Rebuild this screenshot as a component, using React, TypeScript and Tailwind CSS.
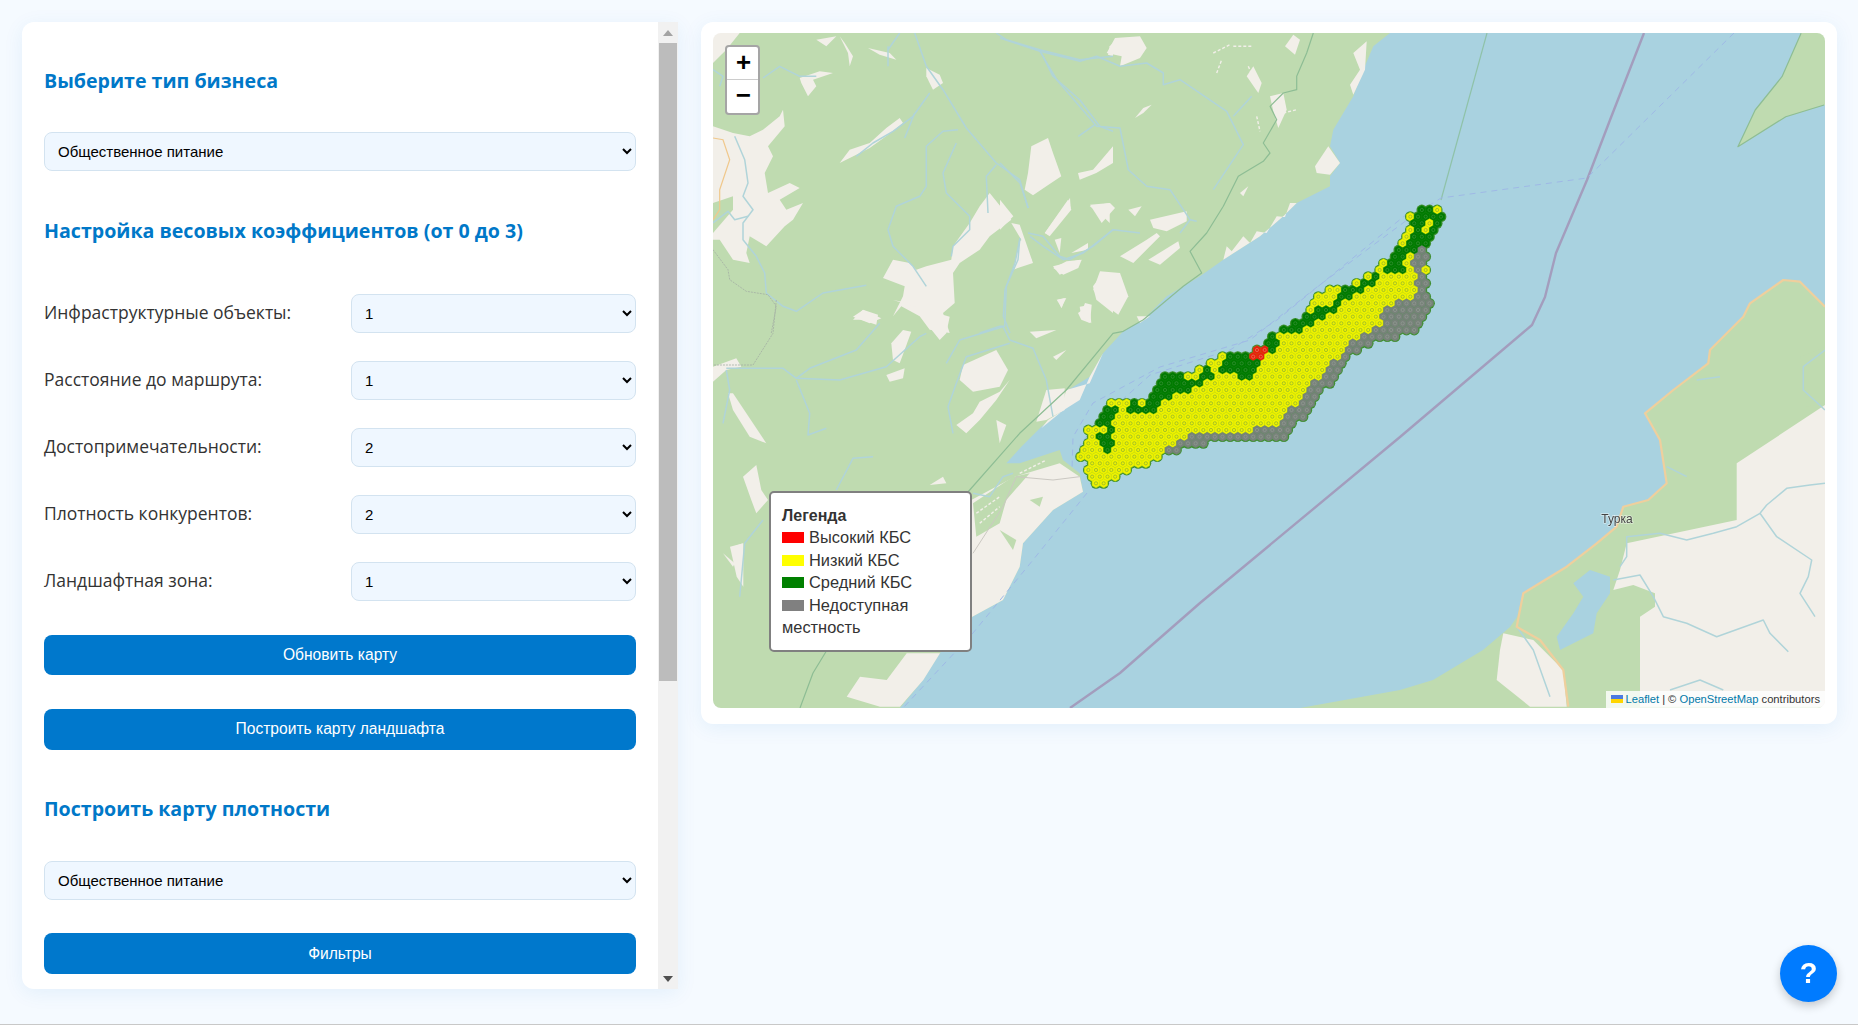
import { useMemo } from 'react';

// перевод координат из кропов 3x в координаты страницы
const conv = (ox: number, oy: number, sx = 3, sy = 3) => (a: number[]) => {
  const out: number[] = [];
  for (let i = 0; i < a.length; i += 2) {
    out.push(+(ox + a[i] / sx).toFixed(1), +(oy + a[i + 1] / sy).toFixed(1));
  }
  return out;
};
const A = conv(713, 33);
const B = conv(1000, 33);
const C = conv(713, 300);
const sw = conv(700, 400);
const se = conv(1400, 250);
const ne = conv(1250, 20, 2.613, 3);
const ph = (a: number[]) => a.join(' ');

const LAND_GREEN = '#bfdbb0';
const BARE = '#f2efe9';
const WATER = '#a9d2e0';
const RIVER = '#b0d4d9';

const westLand = [
  713, 33, 1390, 33,
  ...B([1120, 40, 1090, 110, 1060, 190, 1000, 290, 990, 340, 1020, 390, 990, 430, 990, 460, 890, 510, 850, 550, 780, 610, 670, 680, 600, 730, 500, 790, 430, 860, 370, 895]),
  ...C([1170, 160, 1130, 230, 1065, 270, 1050, 330, 985, 380, 925, 440, 880, 490, 920, 490, 1040, 450, 1050, 480, 1100, 520, 1110, 575, 1020, 630, 930, 730, 920, 800]),
  1003, 600, 970, 618, 940, 653, 923, 680, 900, 708, 713, 708,
];
const eastLand = [1825, 305, 1800, 282, 1783, 280, 1750, 303, 1743, 317, 1710, 350, 1707, 363, 1673, 390, 1645, 413, 1660, 440, 1667, 483, 1648, 500, 1623, 507, 1617, 527, 1597, 543, 1567, 567, 1523, 593, 1517, 617, 1510, 627, 1483, 650, 1433, 680, 1400, 690, 1300, 708, 1825, 708];
const neLand = [1801, 33, 1782, 77, 1755, 110, 1738, 147, 1786, 117, 1825, 105, 1825, 33];

const barePatches: number[][] = [
  A([0, 0, 80, 0, 40, 50, 0, 90]),
  A([0, 280, 60, 300, 110, 310, 150, 290, 200, 250, 210, 230, 215, 280, 165, 340, 180, 370, 155, 420, 165, 480, 230, 450, 260, 465, 200, 500, 220, 530, 270, 510, 240, 560, 215, 580, 160, 640, 110, 610, 100, 660, 110, 690, 60, 680, 20, 620, 0, 620]),
  A([260, 135, 320, 115, 360, 120, 300, 140, 310, 160, 285, 190, 265, 150]),
  A([410, 350, 470, 330, 520, 285, 560, 255, 570, 270, 540, 295, 470, 345, 430, 365, 380, 390]),
  A([465, 45, 530, 60, 550, 80, 500, 65]),
  A([640, 105, 680, 125, 690, 150, 660, 170, 640, 130]),
  A([830, 480, 895, 560, 830, 610, 800, 650, 740, 690, 720, 720, 725, 810, 690, 840, 710, 900, 650, 890, 620, 850, 565, 820, 540, 850, 570, 790, 575, 760, 510, 735, 540, 680, 590, 690, 610, 710, 640, 700, 715, 680, 720, 640, 770, 570, 800, 520]),
  A([955, 340, 1005, 315, 1020, 360, 1045, 430, 1000, 460, 960, 487, 935, 470, 945, 420]),
  A([1095, 420, 1140, 410, 1200, 340, 1200, 390, 1150, 420, 1100, 440]),
  A([995, 600, 1065, 500, 1075, 530, 1010, 610]),
  A([895, 570, 920, 575, 960, 690, 900, 710, 925, 620]),
  A([1130, 520, 1190, 510, 1190, 570, 1160, 540]),
  A([1025, 620, 1045, 615, 1040, 660]),
  A([1075, 660, 1125, 630, 1125, 650]),
  A([1020, 700, 1100, 680, 1095, 700, 1040, 725]),
  A([1140, 760, 1170, 720, 1200, 730, 1200, 840, 1150, 800]),
  A([420, 860, 450, 830, 495, 845, 490, 875, 445, 860]),
  A([1035, 800, 1060, 795, 1045, 825]),
  A([1095, 840, 1130, 815, 1130, 870, 1105, 860]),
  A([1190, 40, 1200, 30, 1200, 70, 1185, 65]),
  A([380, 10, 395, 30, 420, 70, 410, 100, 405, 60]),
  A([310, 20, 370, 10, 340, 40]),
  B([320, 60, 345, 15, 420, 10, 440, 45, 420, 75, 360, 100, 365, 70]),
  B([855, 40, 880, 5, 900, 20, 885, 65]),
  B([740, 130, 760, 100, 785, 150, 775, 180]),
  B([1060, 60, 1100, 25, 1095, 110, 1060, 185, 1050, 155, 1080, 110]),
  B([810, 190, 850, 180, 860, 230, 835, 285, 820, 235]),
  B([945, 400, 985, 340, 1020, 390, 990, 425, 950, 420]),
  B([270, 515, 330, 510, 345, 525, 305, 570]),
  B([135, 600, 210, 495, 212, 525, 145, 605]),
  B([385, 530, 425, 520, 405, 550]),
  B([450, 560, 560, 535, 560, 565, 500, 595, 460, 585]),
  B([360, 670, 440, 620, 470, 600, 480, 610, 400, 690]),
  B([445, 680, 535, 625, 540, 645, 480, 695]),
  B([160, 705, 200, 685, 245, 680, 235, 705, 190, 725]),
  B([280, 770, 300, 715, 360, 720, 385, 790, 355, 845, 300, 805]),
  B([0, 500, 40, 550, 0, 590]),
  B([40, 710, 60, 620, 95, 680]),
  B([240, 850, 255, 810, 275, 815, 270, 870]),
  B([170, 800, 195, 795, 185, 825]),
  B([670, 680, 680, 640, 695, 655, 730, 610, 750, 630, 770, 595, 800, 600, 830, 550, 855, 552, 870, 510, 890, 510, 850, 550, 780, 610, 670, 680]),
  B([410, 850, 450, 850, 420, 870]),
  B([405, 255, 430, 225, 455, 215, 430, 240]),
  B([720, 480, 745, 460, 730, 490]),
  C([0, 200, 70, 175, 85, 200, 40, 210, 0, 245]),
  C([45, 280, 60, 280, 160, 430, 110, 410, 60, 330]),
  C([535, 130, 570, 90, 595, 95, 560, 190, 540, 180]),
  C([520, 225, 575, 205, 570, 235, 530, 245]),
  C([420, 50, 450, 30, 505, 55, 470, 70]),
  C([750, 195, 850, 150, 885, 210, 860, 260, 780, 275, 740, 240]),
  C([730, 375, 780, 340, 800, 305, 860, 275, 890, 240, 850, 300, 800, 360, 760, 400]),
  C([950, 95, 1030, 90, 970, 115]),
  C([1000, 270, 1055, 265, 1055, 330, 1000, 360, 970, 365]),
  C([850, 360, 880, 375, 860, 430]),
  C([540, 0, 710, 50, 700, 100, 680, 120, 640, 70, 590, 10]),
  C([90, 530, 130, 495, 145, 570, 165, 600, 130, 640, 115, 600]),
  C([1020, 170, 1060, 150, 1030, 180]),
  C([30, 760, 65, 790, 60, 800]),
  C([60, 740, 90, 730, 75, 750]),
  C([985, 385, 1005, 360, 1100, 300, 1130, 230, 1170, 160, 1130, 250, 1060, 270, 1040, 340]),
  C([1100, 20, 1130, 15, 1135, 70, 1105, 50]),
  C([650, 555, 690, 530, 700, 550]),
  // полуостров южнее залива
  [...C([775, 600, 905, 530, 1040, 490, 1100, 530, 1110, 575, 1020, 630, 930, 730, 920, 800]), 1003, 600, 970, 618, 965, 560],
  sw([620, 760, 720, 760, 670, 840, 600, 920, 540, 920, 440, 890, 480, 830, 560, 840]),
  sw([90, 440, 130, 430, 130, 560, 110, 530]),
  se([1275, 465, 1010, 640, 1010, 810, 680, 880, 660, 960, 640, 1020, 700, 1005, 765, 1030, 765, 1070, 720, 1100, 720, 1370, 1275, 1370]),
  se([310, 1150, 400, 1170, 490, 1260, 500, 1370, 390, 1370, 290, 1290, 300, 1200]),
];

const greenOnBare: number[][] = [
  C([780, 610, 900, 530, 950, 520, 880, 600, 860, 670, 790, 710]),
  C([950, 600, 990, 590, 980, 620]),
  C([860, 690, 910, 720, 900, 750]),
  A([0, 510, 60, 490, 60, 530, 0, 600]),
  se([1200, 320, 1275, 290, 1275, 460, 1220, 470]),
];

// мелкие пятна и штриховка, где на тайле редкие светлые штрихи
const sparse: number[][] = [
  B([640, 60, 690, 35]),
  B([700, 40, 755, 40]),
  B([650, 120, 665, 80]),
  B([745, 100, 775, 170]),
  B([770, 250, 780, 295]),
  B([850, 240, 890, 230]),
  C([790, 640, 860, 590]),
  C([800, 670, 860, 620]),
  C([920, 520, 1000, 480]),
];

const rivers: number[][] = [
  A([850, 0, 880, 20, 980, 50, 1100, 80, 1200, 70]),
  A([980, 50, 1020, 130, 1100, 200, 1160, 280, 1200, 295]),
  A([605, 0, 640, 100, 690, 170, 760, 285, 850, 390, 920, 440, 945, 525]),
  A([735, 290, 690, 295, 640, 340, 640, 460, 620, 490, 550, 520, 525, 590, 540, 640, 600, 700, 640, 760]),
  A([730, 330, 690, 420, 700, 480, 770, 550, 770, 590, 720, 640, 715, 670]),
  A([850, 395, 820, 430, 825, 540]),
  A([650, 180, 600, 250, 540, 295, 480, 330, 430, 370]),
  A([605, 240, 575, 315]),
  A([150, 135, 200, 100, 260, 130, 310, 130]),
  A([0, 110, 30, 130, 20, 160]),
  A([65, 310, 95, 380, 105, 450, 90, 490, 120, 530, 90, 570, 90, 620, 130, 670, 155, 720, 160, 780, 210, 820, 250, 835, 330, 780, 460, 757]),
  A([0, 570, 45, 535, 65, 560, 105, 550]),
  A([945, 600, 990, 610, 1040, 670, 1070, 680, 1140, 640, 1200, 590]),
  A([920, 620, 915, 680, 880, 760, 875, 880, 860, 880, 800, 900]),
  A([525, 40, 525, 100]),
  A([525, 50, 560, 0]),
  B([0, 15, 120, 55, 240, 85, 290, 70, 360, 100, 440, 90, 490, 120, 490, 155, 540, 140, 680, 235, 730, 335, 640, 470]),
  B([120, 55, 170, 140, 290, 280, 360, 285, 385, 410, 440, 460, 510, 470, 570, 560, 540, 600]),
  B([570, 560, 590, 565]),
  B([420, 600, 340, 590, 250, 660, 190, 680, 130, 640, 90, 610]),
  B([0, 390, 60, 450, 85, 525]),
  B([60, 615, 45, 690, 15, 770, 10, 850, 30, 900]),
  B([235, 310, 285, 275]),
  B([700, 250, 755, 190]),
  C([40, 205, 210, 205, 250, 235, 380, 240, 520, 200, 620, 110, 640, 100]),
  C([250, 235, 290, 205, 430, 150, 500, 70]),
  C([250, 240, 290, 340, 285, 405, 340, 385]),
  C([700, 190, 740, 120, 870, 80, 890, 120, 960, 145, 1000, 240, 1020, 350]),
  C([890, 130, 760, 170, 730, 250, 705, 320, 720, 400]),
  C([370, 570, 420, 475, 480, 470]),
  C([40, 210, 50, 270, 30, 370]),
  C([80, 890, 95, 730, 150, 660]),
  C([780, 580, 830, 590, 870, 530, 900, 520]),
  se([1275, 700, 1230, 705, 1160, 715, 1100, 765, 1080, 790, 1010, 830, 940, 850, 860, 870, 780, 850, 680, 860, 680, 920, 660, 950]),
  se([1080, 790, 1130, 860, 1235, 930, 1225, 980, 1200, 1030, 1245, 1100]),
  se([640, 990, 720, 975, 760, 1040, 790, 1100, 860, 1120, 950, 1160, 1090, 1110, 1110, 1150, 1165, 1205]),
  se([810, 1320, 900, 1290, 970, 1320]),
  se([350, 1130, 400, 1200, 450, 1340]),
  se([1275, 300, 1210, 350, 1210, 420, 1275, 480]),
  se([890, 390, 960, 380]),
  se([800, 650, 860, 680]),
];

const borderGreen: number[][] = [
  [...B([940, 0, 920, 60, 890, 130, 890, 170, 850, 180, 810, 220, 830, 260, 790, 330, 810, 360, 790, 385, 715, 430, 670, 520, 620, 600, 570, 655, 605, 720, 550, 760, 430, 860, 370, 895]), ...C([1200, 100, 1060, 270, 920, 400, 770, 570]), 827, 650, 813, 673, 800, 708],
  ne([1440, 40, 1390, 170, 1320, 270, 1275, 380, 1400, 290, 1500, 255]),
];
const road = se([1275, 170, 1200, 95, 1150, 90, 1050, 160, 1030, 200, 930, 300, 925, 340, 820, 420, 735, 490, 780, 570, 800, 700, 745, 750, 670, 770, 650, 830, 590, 880, 500, 950, 370, 1030, 350, 1130, 420, 1170, 490, 1260, 505, 1370]);
const ferry = [1644, 33, 1610, 120, 1587, 180, 1556, 253, 1545, 297, 1532, 325, 1400, 437, 1200, 603, 1120, 673, 1070, 708];
const dashed: number[][] = [
  [1734, 33, 1587, 178, 1441, 198, 1411, 217, 1317, 287, 1250, 340, 1160, 367, 1093, 403, 1073, 437, 1072, 470],
  [1408, 213, 1277, 320, 1230, 350, 1150, 375, 1100, 420, 1080, 445, 1085, 470],
  [1087, 493, 1033, 560, 973, 633, 903, 708],
];

// зоны КБС заданы в координатах кропа 3x от точки (1050,190)
const outline = [130, 885, 175, 870, 250, 830, 330, 795, 390, 775, 440, 755, 520, 750, 610, 742, 690, 740, 745, 690, 795, 610, 850, 560, 890, 495, 960, 455, 1010, 435, 1100, 430, 1140, 355, 1120, 270, 1120, 200, 1135, 170, 1175, 85, 1140, 45, 1085, 80, 1072, 125, 1050, 170, 1015, 220, 985, 228, 950, 275, 880, 298, 820, 308, 795, 350, 780, 378, 700, 418, 650, 462, 600, 490, 520, 505, 460, 540, 420, 575, 400, 555, 340, 565, 300, 635, 240, 635, 210, 635, 165, 650, 150, 695, 112, 725, 120, 755, 85, 790, 110, 810, 145, 785, 135, 810, 108, 825];
const greenZone = [130, 720, 165, 645, 210, 665, 240, 635, 290, 650, 310, 620, 340, 560, 400, 550, 430, 575, 470, 540, 530, 500, 600, 490, 640, 455, 700, 415, 740, 390, 790, 362, 830, 355, 880, 298, 940, 275, 985, 245, 1020, 190, 1060, 165, 1085, 75, 1140, 40, 1180, 85, 1150, 130, 1130, 170, 1090, 190, 1085, 235, 1040, 245, 990, 255, 950, 300, 900, 320, 870, 360, 820, 385, 770, 415, 700, 460, 660, 495, 620, 525, 605, 560, 570, 562, 540, 540, 480, 575, 430, 600, 380, 610, 340, 630, 310, 690, 290, 660, 240, 670, 210, 670, 190, 710, 180, 750, 200, 790, 170, 780, 140, 750];
const yellowHoles = [
  [1105, 132, 1120, 92, 1160, 85, 1128, 132],
  [1050, 218, 1080, 170, 1098, 190, 1065, 228],
  [1055, 160, 1075, 130, 1088, 145, 1065, 172],
  [980, 245, 985, 225, 1005, 232, 995, 250],
  [795, 352, 812, 305, 885, 300, 845, 345, 805, 360],
  [680, 442, 700, 420, 720, 440, 690, 448],
  [455, 555, 520, 505, 525, 525, 480, 555],
  [130, 715, 165, 695, 170, 725, 140, 730],
  [1070, 110, 1090, 105, 1085, 125, 1072, 125],
  [205, 660, 215, 635, 222, 665],
];
const greyZone = [325, 800, 385, 752, 440, 735, 520, 728, 600, 725, 680, 700, 725, 655, 785, 580, 840, 530, 880, 480, 950, 425, 1000, 415, 1000, 370, 1030, 335, 1095, 340, 1105, 315, 1090, 240, 1085, 190, 1130, 170, 1125, 270, 1150, 355, 1115, 445, 1000, 450, 960, 470, 890, 510, 850, 575, 795, 625, 745, 705, 690, 755, 610, 757, 520, 765, 440, 770, 390, 790, 330, 810];
const redZone = [590, 495, 615, 470, 640, 455, 648, 485, 620, 518, 595, 512];

const inside = (x: number, y: number, p: number[]) => {
  let hit = false;
  for (let i = 0, j = p.length - 2; i < p.length; j = i, i += 2) {
    const xi = p[i], yi = p[i + 1], xj = p[j], yj = p[j + 1];
    if (yi > y !== yj > y && x < ((xj - xi) * (y - yi)) / (yj - yi) + xi) hit = !hit;
  }
  return hit;
};

const CELL_COLORS: Record<string, { fill: string; stroke: string; dot: string }> = {
  yellow: { fill: '#eef200', stroke: '#d2e208', dot: '#9cbc28' },
  green: { fill: '#007a00', stroke: '#0f830f', dot: '#2f8c2f' },
  grey: { fill: '#78827a', stroke: '#6c8a70', dot: '#8d968e' },
  red: { fill: '#e8200c', stroke: '#d84a10', dot: '#e86a50' },
};

const buildCells = () => {
  const cells: { x: number; y: number; kind: string }[] = [];
  const pitch = 23;
  const rowH = 20;
  const reach = 8;
  for (let r = 0; r * rowH < 960; r++) {
    for (let c = 0; c * pitch < 1260; c++) {
      const zx = c * pitch + (r % 2 ? pitch / 2 : 0);
      const zy = r * rowH;
      const near = [0, 1, 2, 3, 4, 5].some((k) => {
        const a = (k * Math.PI) / 3;
        return inside(zx + reach * Math.cos(a), zy + reach * Math.sin(a), outline);
      });
      if (!near && !inside(zx, zy, greenZone) && !yellowHoles.some((h) => inside(zx, zy, h))) continue;
      let kind = 'yellow';
      if (inside(zx, zy, redZone)) kind = 'red';
      else if (yellowHoles.some((h) => inside(zx, zy, h))) kind = 'yellow';
      else if (inside(zx, zy, greyZone)) kind = 'grey';
      else if (inside(zx, zy, greenZone)) kind = 'green';
      cells.push({ x: 1050 + zx / 3, y: 190 + zy / 3, kind });
    }
  }
  return cells;
};

const hexPoints = (x: number, y: number) => {
  const r = 4.5;
  const pts: string[] = [];
  for (let i = 0; i < 6; i++) {
    const a = Math.PI / 6 + (i * Math.PI) / 3;
    pts.push(`${(x + r * Math.cos(a)).toFixed(1)},${(y + r * Math.sin(a)).toFixed(1)}`);
  }
  return pts.join(' ');
};

const MapDrawing = () => {
  const cells = useMemo(buildCells, []);
  return (
    <svg viewBox="713 33 1112 675" className="block h-full w-full blur-[0.5px]">
      <rect x="703" y="23" width="1132" height="695" fill={WATER} />
      <polygon points={ph(westLand)} fill={LAND_GREEN} />
      <polygon points={ph(eastLand)} fill={LAND_GREEN} />
      <polygon points={ph(neLand)} fill={LAND_GREEN} />
      {barePatches.map((p, i) => (
        <polygon key={i} points={ph(p)} fill={BARE} strokeLinejoin="round" />
      ))}
      {greenOnBare.map((p, i) => (
        <polygon key={i} points={ph(p)} fill={LAND_GREEN} />
      ))}
      {sparse.map((p, i) => (
        <polyline key={i} points={ph(p)} fill="none" stroke={BARE} strokeWidth="1.4" strokeDasharray="3 2" />
      ))}
      <polygon points={ph(se([520, 1000, 570, 960, 630, 980, 630, 1030, 590, 1090, 580, 1150, 480, 1200, 470, 1160, 520, 1090, 550, 1040]))} fill={WATER} />
      {rivers.map((p, i) => (
        <polyline key={i} points={ph(p)} fill="none" stroke={RIVER} strokeWidth="1.5" strokeLinejoin="round" />
      ))}
      {borderGreen.map((p, i) => (
        <polyline key={i} points={ph(p)} fill="none" stroke="#8dbd94" strokeWidth="1.2" strokeLinejoin="round" />
      ))}
      <polyline points="1487,33 1441,200" fill="none" stroke="#8fc2a8" strokeWidth="1.2" />
      <polyline points={ph(A([0, 650, 45, 710, 50, 740, 100, 775, 165, 785, 190, 820, 175, 900]))} fill="none" stroke="#a3afa3" strokeWidth="0.8" strokeDasharray="2 1" />
      <polyline points={ph(C([190, 0, 180, 100, 120, 195, 0, 195]))} fill="none" stroke="#a3afa3" strokeWidth="0.8" strokeDasharray="2 1" />
      <polyline points={ph(A([0, 315, 30, 320, 50, 380, 20, 470, 20, 530, 0, 560]))} fill="none" stroke="#f0c88c" strokeWidth="1.2" />
      <polyline points={ph(C([1100, 530, 1020, 540, 910, 530, 870, 620, 780, 760]))} fill="none" stroke="#cbc8c2" strokeWidth="1" />
      <polyline points={ph(road)} fill="none" stroke="#efcf9d" strokeWidth="2.2" strokeLinejoin="round" />
      <polyline points={ph(ferry)} fill="none" stroke="#a39dbd" strokeWidth="2.4" strokeLinejoin="round" />
      {dashed.map((p, i) => (
        <polyline key={i} points={ph(p)} fill="none" stroke="#9fb9e6" strokeWidth="1" strokeDasharray="6 5" />
      ))}
      <text x="1617" y="523" textAnchor="middle" fontSize="12" fill="#444" stroke="#ffffff" strokeOpacity="0.5" strokeWidth="1.5" paintOrder="stroke" fontFamily="'Liberation Sans', sans-serif">
        Турка
      </text>
      {/* подложка даёт зубчатый зелёный контур вокруг всей зоны */}
      {cells.map((c, i) => (
        <circle key={i} cx={c.x} cy={c.y} r="5.4" fill="#3f8f2f" />
      ))}
      {cells.map((c, i) => {
        const col = CELL_COLORS[c.kind];
        return (
          <g key={i}>
            <polygon points={hexPoints(c.x, c.y)} fill={col.fill} stroke={col.stroke} strokeWidth="0.5" />
            <circle cx={c.x} cy={c.y} r="1.6" fill="none" stroke={col.dot} strokeWidth="0.9" />
          </g>
        );
      })}
    </svg>
  );
};

const LegendRow = ({ color, label }: { color: string; label: string }) => (
  <>
    <i className="mr-[5px] inline-block h-[11px] w-[22px] align-[0px]" style={{ backgroundColor: color }} />
    {label}
    <br />
  </>
);

const Heading = ({ children, className }: { children: string; className: string }) => (
  <h3 className={`h-[30px] font-['Open_Sans',sans-serif] text-[19.6px] leading-[30px] font-bold text-[#0078c8] ${className}`}>{children}</h3>
);

const Select = ({ value, options, className }: { value: string; options: string[]; className: string }) => (
  <select
    defaultValue={value}
    className={`h-[39px] rounded-[8px] border border-[#d3e3f0] bg-[#eff7ff] px-[9px] font-['Liberation_Sans',sans-serif] text-[15px] text-black ${className}`}
  >
    {options.map((o) => (
      <option key={o}>{o}</option>
    ))}
  </select>
);

const ActionButton = ({ children, className }: { children: string; className: string }) => (
  <button className={`block w-full rounded-[8px] bg-[#0078cc] text-center font-['Liberation_Sans',sans-serif] text-[15.6px] text-white ${className}`}>
    {children}
  </button>
);

const business = ['Общественное питание', 'Гостиницы', 'Торговля'];
const weights = ['0', '1', '2', '3'];
const rows = [
  ['Инфраструктурные объекты:', '1'],
  ['Расстояние до маршрута:', '1'],
  ['Достопримечательности:', '2'],
  ['Плотность конкурентов:', '2'],
  ['Ландшафтная зона:', '1'],
];

const Scrollbar = () => (
  <div className="flex h-full w-[20px] shrink-0 flex-col bg-[#f1f1f1]">
    <div className="flex h-[21px] items-center justify-center">
      <div className="h-0 w-0 border-x-[5px] border-b-[6px] border-x-transparent border-b-[#a3a3a3]" />
    </div>
    <div className="mx-[1px] h-[638px] bg-[#bcbcbc]" />
    <div className="flex-1" />
    <div className="flex h-[21px] items-center justify-center">
      <div className="h-0 w-0 border-x-[5px] border-t-[6px] border-x-transparent border-t-[#505050]" />
    </div>
  </div>
);

export default function App() {
  return (
    <div className="flex h-[1025px] gap-[23px] overflow-hidden border-b border-[#c8c8c8] bg-[#f5faff] pt-[22px] pr-[21px] pl-[22px] font-['Liberation_Sans',sans-serif]">
      <aside className="flex h-[967px] w-[656px] shrink-0 overflow-hidden rounded-l-[12px] bg-white shadow-[0_4px_20px_rgba(0,120,200,0.08)]">
        <div className="min-w-0 flex-1 overflow-hidden px-[22px] pt-[44px]">
          <Heading className="">Выберите тип бизнеса</Heading>
          <Select value={business[0]} options={business} className="mt-[36px] block w-full" />
          <Heading className="mt-[45px]">Настройка весовых коэффициентов (от 0 до 3)</Heading>
          <div className="mt-[48px] flex flex-col gap-[28px]">
            {rows.map(([label, value]) => (
              <div key={label} className="flex items-center justify-between">
                <label className="pb-[2px] font-['Open_Sans',sans-serif] text-[17.5px] font-medium text-[#333]">{label}</label>
                <Select value={value} options={weights} className="w-[285px]" />
              </div>
            ))}
          </div>
          <ActionButton className="mt-[34px] h-[40px]">Обновить карту</ActionButton>
          <ActionButton className="mt-[34px] h-[41px] pb-[1px]">Построить карту ландшафта</ActionButton>
          <Heading className="mt-[44px]">Построить карту плотности</Heading>
          <Select value={business[0]} options={business} className="mt-[37px] block w-full" />
          <ActionButton className="mt-[33px] h-[41px] pt-[1px]">Фильтры</ActionButton>
        </div>
        <Scrollbar />
      </aside>

      <main className="min-w-0 flex-1">
        <div className="rounded-[12px] bg-white px-[12px] pt-[11px] pb-[16px] shadow-[0_4px_20px_rgba(0,120,200,0.08)]">
          <div className="relative h-[675px] overflow-hidden rounded-[8px]">
            <MapDrawing />

            <div className="absolute top-[12px] left-[12px] w-[35px] overflow-hidden rounded-[4px] border-2 border-[#a5a5a5] bg-white font-['Liberation_Mono',monospace] font-bold text-black">
              <div className="flex h-[33px] items-center justify-center border-b border-[#ccc] pt-[2px] pl-[2px] text-[26px] leading-none">+</div>
              <div className="flex h-[33px] items-center justify-center pt-[1px] pl-[2px] text-[26px] leading-none">−</div>
            </div>

            <div className="absolute bottom-[56px] left-[56px] w-[203px] rounded-[5px] border-2 border-[#808080] bg-white px-[11px] pt-[12px] pb-[11px] text-[16.4px] leading-[22.6px] text-[#333]">
              <div className="-mb-[2px] text-[16px] font-bold">Легенда</div>
              <LegendRow color="#ff0000" label="Высокий КБС" />
              <LegendRow color="#ffff00" label="Низкий КБС" />
              <LegendRow color="#008000" label="Средний КБС" />
              <LegendRow color="#808080" label="Недоступная местность" />
            </div>

            <div className="absolute right-0 bottom-0 flex h-[17px] items-center bg-white/80 px-[5px] pb-[1px] text-[11.2px] text-[#333]">
              <svg width="12" height="8" viewBox="0 0 12 8" className="mr-[3px]">
                <rect width="12" height="4" fill="#4C7BE1" />
                <rect y="4" width="12" height="4" fill="#FFD500" />
              </svg>
              <span className="text-[#0078A8]">Leaflet</span>
              <span className="mx-[3px]">|</span>
              <span>©&nbsp;</span>
              <span className="text-[#0078A8]">OpenStreetMap</span>
              <span>&nbsp;contributors</span>
            </div>
          </div>
        </div>
      </main>

      <button className="fixed right-[21px] bottom-[23px] flex h-[57px] w-[57px] items-center justify-center rounded-full bg-[#007bff] text-[29px] font-bold text-white shadow-[0_4px_10px_rgba(0,0,0,0.2)]">
        ?
      </button>
    </div>
  );
}
